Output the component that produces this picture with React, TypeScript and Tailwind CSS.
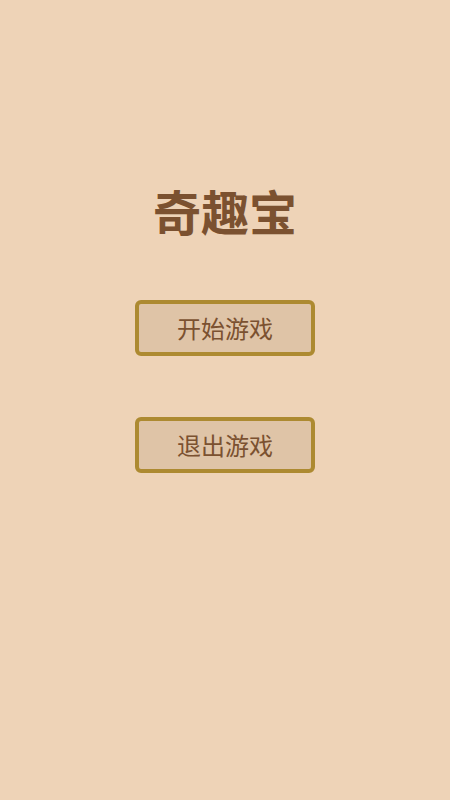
export default function App() {
  return (
    <div
      className="flex h-[800px] w-full flex-col items-center bg-[#eed3b7]"
      style={{ fontFamily: '"Noto Sans CJK SC", "Noto Sans", sans-serif' }}
    >
      <h1 className="mt-[178px] text-[48px] font-bold leading-[64px] text-[#7b5130]">
        奇趣宝
      </h1>
      <button className="mt-[58px] flex h-[56px] w-[180px] items-center justify-center rounded-[6px] border-4 border-[#ad8a31] bg-[#dfc4a7] text-[24px] text-[#7b5130]">
        开始游戏
      </button>
      <button className="mt-[61px] flex h-[56px] w-[180px] items-center justify-center rounded-[6px] border-4 border-[#ad8a31] bg-[#dfc4a7] text-[24px] text-[#7b5130]">
        退出游戏
      </button>
    </div>
  );
}
